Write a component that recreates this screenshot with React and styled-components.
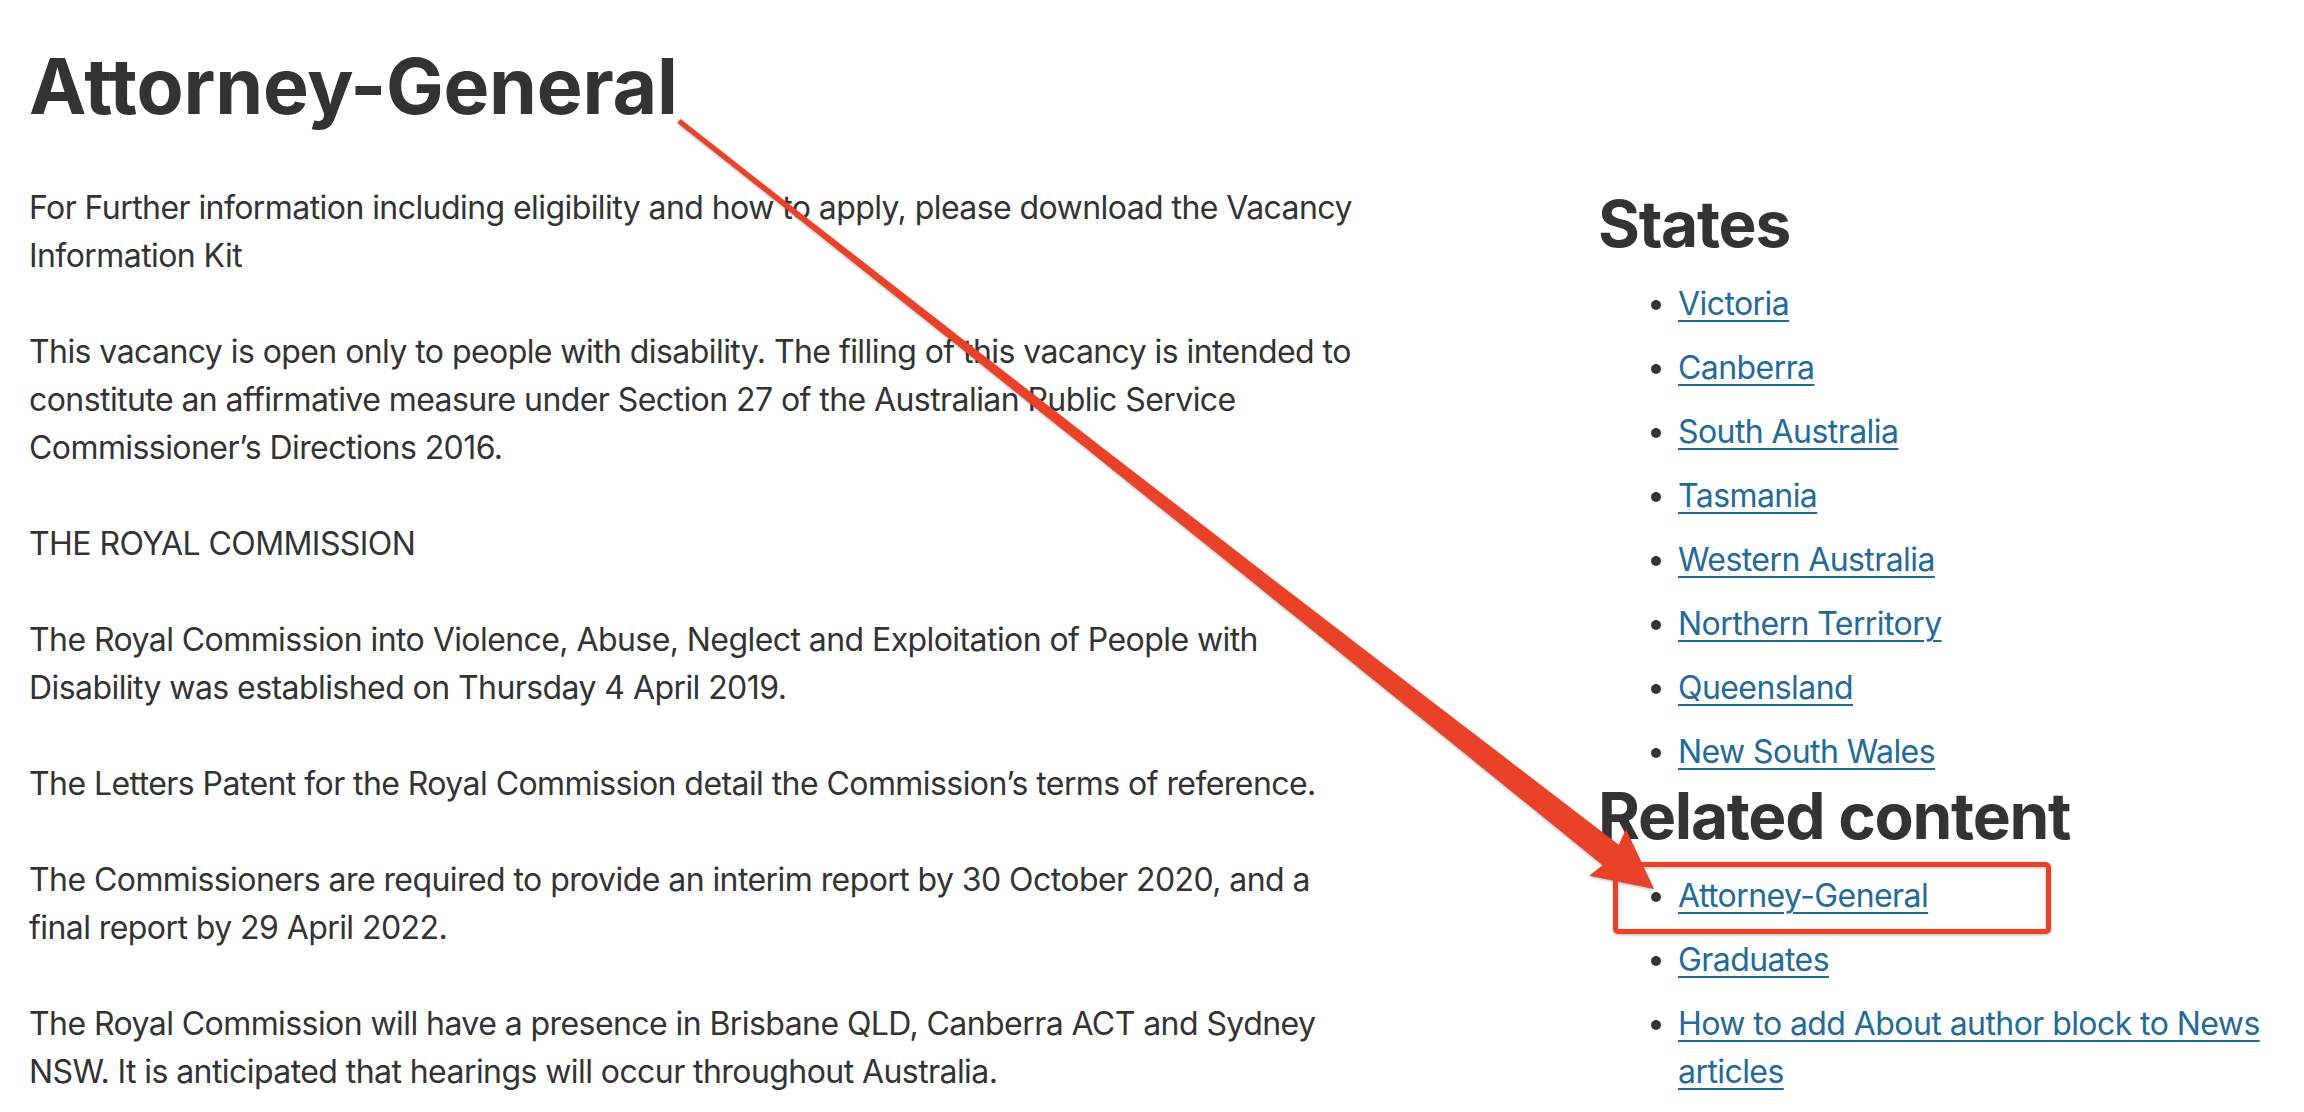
import React from "react";
import styled, { createGlobalStyle } from "styled-components";

const paragraphs = [
	"For Further information including eligibility and how to apply, please download the Vacancy Information Kit",
	"This vacancy is open only to people with disability. The filling of this vacancy is intended to constitute an affirmative measure under Section 27 of the Australian Public Service Commissioner’s Directions 2016.",
	"THE ROYAL COMMISSION",
	"The Royal Commission into Violence, Abuse, Neglect and Exploitation of People with Disability was established on Thursday 4 April 2019.",
	"The Letters Patent for the Royal Commission detail the Commission’s terms of reference.",
	"The Commissioners are required to provide an interim report by 30 October 2020, and a final report by 29 April 2022.",
	"The Royal Commission will have a presence in Brisbane QLD, Canberra ACT and Sydney NSW. It is anticipated that hearings will occur throughout Australia.",
];

const states = [
	"Victoria",
	"Canberra",
	"South Australia",
	"Tasmania",
	"Western Australia",
	"Northern Territory",
	"Queensland",
	"New South Wales",
];

const related = [
	"Attorney-General",
	"Graduates",
	"How to add About author block to News articles",
];

// tapered annotation arrow, built from start / tip points
function arrowPoints() {
	const sx = 679;
	const sy = 121;
	const tx = 1654;
	const ty = 889;
	const len = Math.hypot(tx - sx, ty - sy);
	const dx = (tx - sx) / len;
	const dy = (ty - sy) / len;
	const nx = -dy;
	const ny = dx;
	const headLen = 59;
	const headHalf = 29.6;
	const base = len - headLen;
	const width = (s) => 5 + 21 * Math.pow(s / base, 1.6);
	const at = (s, off) => [sx + dx * s + nx * off, sy + dy * s + ny * off];

	const left = [];
	const right = [];
	const steps = 16;
	for (let i = 0; i <= steps; i++) {
		const s = (base + 4) * (i / steps);
		const w = width(Math.min(s, base)) / 2;
		left.push(at(s, w));
		right.push(at(s, -w));
	}
	const pts = [
		...left,
		at(base, headHalf),
		[tx, ty],
		at(base, -headHalf),
		...right.reverse(),
	];
	return pts.map((p) => p[0].toFixed(1) + "," + p[1].toFixed(1)).join(" ");
}

function App() {
	return (
		<Page>
			<GlobalStyle />
			<Title>Attorney-General</Title>
			<Columns>
				<Main>
					{paragraphs.map((text) => (
						<Paragraph key={text}>{text}</Paragraph>
					))}
				</Main>
				<Sidebar>
					<BlockTitle>States</BlockTitle>
					<LinkList>
						{states.map((name) => (
							<LinkItem key={name}>
								<ItemLink href="#">{name}</ItemLink>
							</LinkItem>
						))}
					</LinkList>
					<BlockTitle>Related content</BlockTitle>
					<LinkList>
						{related.map((name) => (
							<LinkItem key={name}>
								<ItemLink href="#">{name}</ItemLink>
							</LinkItem>
						))}
					</LinkList>
				</Sidebar>
			</Columns>
			<Annotation viewBox="0 0 2304 1112">
				<polygon points={arrowPoints()} fill="#ea4129" />
				<rect
					x="1615.5"
					y="864.5"
					width="433"
					height="67"
					rx="3"
					fill="none"
					stroke="#ea4129"
					strokeWidth="5"
				/>
			</Annotation>
		</Page>
	);
}

export default App;

// Styled Components

const GlobalStyle = createGlobalStyle`
	html, body {
		margin: 0;
		padding: 0;
		background: #ffffff;
	}
	body {
		font-family: Inter, "Noto Sans", sans-serif;
		color: #333333;
	}
`;

const Page = styled.div`
	position: relative;
	width: 2304px;
	height: 1112px;
	overflow: hidden;
	padding: 0 28px 0 29px;
	box-sizing: border-box;
	background: #ffffff;
`;

const Title = styled.h1`
	font-size: 77px;
	font-weight: 700;
	line-height: 1.2;
	letter-spacing: -0.25px;
	margin: 40px 0 52px 0;
	color: #333333;
`;

const Columns = styled.div`
	display: grid;
	grid-template-columns: 1340px 1fr;
	column-gap: 229px;
	align-items: start;
`;

const Main = styled.div`
	display: flex;
	flex-direction: column;
	gap: 48px;
`;

const Paragraph = styled.p`
	margin: 0;
	font-size: 32px;
	line-height: 48px;
	letter-spacing: -0.57px;
	color: #333333;
`;

const Sidebar = styled.aside`
	display: flex;
	flex-direction: column;
`;

const BlockTitle = styled.h2`
	font-size: 64px;
	font-weight: 700;
	line-height: 80px;
	letter-spacing: -1.27px;
	margin: 0 0 16px 0;
	color: #333333;
`;

const LinkList = styled.ul`
	margin: 0;
	padding-left: 80px;
	display: flex;
	flex-direction: column;
	gap: 16px;
`;

const LinkItem = styled.li`
	font-size: 32px;
	line-height: 48px;
	letter-spacing: -0.57px;
	color: #333333;
`;

const ItemLink = styled.a`
	color: #246a98;
	text-decoration: underline;
	text-decoration-thickness: 2px;
	text-underline-offset: 5px;
`;

const Annotation = styled.svg`
	position: absolute;
	top: 0;
	left: 0;
	width: 2304px;
	height: 1112px;
	pointer-events: none;
	filter: drop-shadow(0 1px 1.5px rgba(0, 0, 0, 0.3));
`;
